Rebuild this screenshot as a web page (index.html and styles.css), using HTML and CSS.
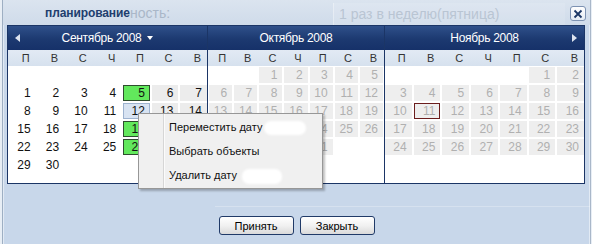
FILE: index.html
```html
<!DOCTYPE html>
<html lang="ru">
<head>
  <meta charset="UTF-8" />
  <title>Планирование</title>
  <link rel="stylesheet" href="styles.css">
</head>
<body>

  <div class="dialog">
    <div class="dialog-head">
      <span class="ghost ghost-label">ность:</span>
      <span class="ghost ghost-field">1 раз в неделю(пятница)</span>
      <span class="dialog-title">планирование</span>
      <button class="close-btn" title="Закрыть">
        <svg width="10" height="10" viewBox="0 0 10 10"><path d="M1.5 1.5L8.5 8.5M8.5 1.5L1.5 8.5" stroke="#1c3766" stroke-width="1.8" fill="none"/></svg>
      </button>
    </div>

    <div class="calendar">
      <div class="month m-sep">
        <div class="month-head">
          <span class="nav nav-prev"></span>
          <span class="month-title">Сентябрь 2008 <span class="drop"></span></span>
          <span></span>
        </div>
        <div class="dow"><span>П</span><span>В</span><span>С</span><span>Ч</span><span>П</span><span>С</span><span>В</span></div>
        <div class="days" id="sep"></div>
      </div>
      <div class="month m-oct">
        <div class="month-head">
          <span></span>
          <span class="month-title">Октябрь 2008</span>
          <span></span>
        </div>
        <div class="dow"><span>П</span><span>В</span><span>С</span><span>Ч</span><span>П</span><span>С</span><span>В</span></div>
        <div class="days" id="oct"></div>
      </div>
      <div class="month m-nov">
        <div class="month-head">
          <span></span>
          <span class="month-title">Ноябрь 2008</span>
          <span class="nav nav-next"></span>
        </div>
        <div class="dow"><span>П</span><span>В</span><span>С</span><span>Ч</span><span>П</span><span>С</span><span>В</span></div>
        <div class="days" id="nov"></div>
      </div>
    </div>

    <div class="ghost-line"></div>

    <div class="dialog-foot">
      <button class="btn">Принять</button>
      <button class="btn">Закрыть</button>
    </div>

    <div class="ctx-menu">
      <div class="ctx-item">Переместить дату<span class="blot blot-1"></span></div>
      <div class="ctx-item">Выбрать объекты</div>
      <div class="ctx-item">Удалить дату<span class="blot blot-2"></span></div>
    </div>
  </div>

  <script>
    function fillMonth(id, offset, count, dayClass) {
      const grid = document.getElementById(id);
      for (let i = 0; i < 42; i++) {
        const cell = document.createElement("span");
        const day = i - offset + 1;
        cell.className = "day";
        if (day >= 1 && day <= count) {
          cell.textContent = day;
          cell.className += " " + dayClass(day, i % 7);
        }
        grid.appendChild(cell);
      }
    }

    // september: scheduled days are green, weekends grey
    fillMonth("sep", 7, 30, function(day, col) {
      if ([5, 19, 26].includes(day)) return "hit";
      if (day === 12) return "now";
      return col > 4 ? "we" : "";
    });
    fillMonth("oct", 2, 31, function() { return "off"; });
    fillMonth("nov", 5, 30, function(day) {
      return day === 11 ? "off mark" : "off";
    });
  </script>
</body>
</html>
```

FILE: styles.css
```css
* {
  box-sizing: border-box;
}

body {
  margin: 0;
  width: 592px;
  height: 244px;
  overflow: hidden;
  background: #e8eef5;
  font-family: "Liberation Sans", Arial, sans-serif;
}

.dialog {
  position: relative;
  margin-left: 2px;
  width: 589px;
  height: 244px;
  border-left: 1px solid #9eafc3;
  border-right: 1px solid #a9b7c9;
  background: #c8d7ea;
  box-shadow: inset 1px 0 #e2eaf4, inset -1px 0 #e2eaf4;
}

.dialog-head {
  position: relative;
  height: 25px;
  display: flex;
  align-items: center;
  padding: 0 4px 0 42px;
  background: linear-gradient(#dbe4ef, #cfdbea);
}

.ghost {
  position: absolute;
  color: #aab7c8;
  font-size: 14px;
}

.ghost-label {
  left: 127px;
  top: 5px;
}

.ghost-field {
  left: 330px;
  top: 3px;
  width: 232px;
  height: 22px;
  line-height: 22px;
  padding-left: 5px;
  color: #b9c5d3;
  background: rgba(255, 255, 255, 0.12);
  border-left: 1px solid rgba(255, 255, 255, 0.35);
}

.dialog-title {
  position: relative;
  font-size: 12px;
  font-weight: bold;
  color: #213e6e;
  letter-spacing: -0.1px;
}

.close-btn {
  position: relative;
  margin-left: auto;
  margin-top: 2px;
  width: 16px;
  height: 15px;
  padding: 0;
  display: flex;
  align-items: center;
  justify-content: center;
  border: 1px solid #7d92b2;
  border-radius: 3px;
  background: linear-gradient(#ffffff, #e4ebf4);
}

.calendar {
  margin-left: 4px;
  width: 578px;
  display: flex;
  border: 1px solid #1b3566;
  background: #fff;
}

.month {
  display: flex;
  flex-direction: column;
}

.m-sep {
  width: 199px;
}

.m-oct {
  width: 177px;
  border-left: 1px solid #1b3566;
}

.m-nov {
  width: 200px;
  border-left: 1px solid #1b3566;
}

.month-head {
  height: 24px;
  display: grid;
  grid-template-columns: 20px 1fr 20px;
  align-items: center;
  background: linear-gradient(#2f508a, #1c3970 55%, #163169);
  color: #fff;
}

.month-title {
  justify-self: center;
  display: flex;
  align-items: center;
  gap: 6px;
  font-size: 12px;
  letter-spacing: -0.3px;
}

.drop {
  border-left: 3.5px solid transparent;
  border-right: 3.5px solid transparent;
  border-top: 4px solid #fff;
}

.nav {
  width: 0;
  height: 0;
  border-top: 4px solid transparent;
  border-bottom: 4px solid transparent;
}

.nav-prev {
  justify-self: start;
  margin-left: 7px;
  border-right: 5px solid #dde4ef;
}

.nav-next {
  justify-self: end;
  margin-right: 7px;
  border-left: 5px solid #dde4ef;
}

.dow,
.days {
  display: grid;
  grid-template-columns: repeat(7, 1fr);
  column-gap: 2px;
}

.dow {
  height: 16px;
  align-items: center;
  background: linear-gradient(#e2eaf4, #d6e1ee);
  font-size: 11px;
  color: #333;
  text-align: right;
}

.dow span {
  padding-right: 6px;
}

.days {
  grid-auto-rows: 16px;
  row-gap: 2px;
  padding-top: 1px;
  padding-bottom: 10px;
}

.m-sep .dow,
.m-sep .days {
  padding-left: 1px;
}

.m-oct .dow,
.m-oct .days {
  padding-left: 1px;
  padding-right: 1px;
}

.day {
  font-size: 12px;
  line-height: 16px;
  text-align: right;
  padding-right: 5px;
  color: #111;
}

.day.we {
  background: #ececec;
}

.day.hit {
  background: #62e85c;
  border: 1px solid #2e4d2e;
  line-height: 14px;
  padding-right: 4px;
}

.day.now {
  background: #d8e3f2;
  border: 1px solid #9db2cf;
  line-height: 14px;
  padding-right: 4px;
}

.day.off {
  background: #eeeeee;
  color: #b0b0b0;
}

.day.mark {
  border: 1px solid #6b1d1d;
  line-height: 14px;
  padding-right: 4px;
}

.ghost-line {
  height: 1px;
  margin: 22px 0 0 212px;
  background: rgba(255, 255, 255, 0.25);
}

.dialog-foot {
  display: flex;
  justify-content: center;
  gap: 6px;
  margin-top: 9px;
}

.btn {
  width: 75px;
  height: 19px;
  padding: 0;
  border: 1px solid #203a68;
  border-radius: 3px;
  background: linear-gradient(#ffffff, #f1f1f1 50%, #dadada);
  font-family: "Liberation Sans", Arial, sans-serif;
  font-size: 11px;
  color: #000;
}

.ctx-menu {
  position: absolute;
  left: 135px;
  top: 113px;
  width: 185px;
  height: 76px;
  padding-top: 1px;
  border: 1px solid #979797;
  background: linear-gradient(to right, #f0f0f0 24px, #d6d6d6 24px, #d6d6d6 25px, #fbfbfb 25px, #fbfbfb 26px, #f0f0f0 26px);
  box-shadow: 2px 2px 2px rgba(0, 0, 0, 0.25);
}

.ctx-item {
  height: 24px;
  line-height: 24px;
  padding-left: 30px;
  font-size: 11px;
  color: #111;
}

.blot {
  display: inline-block;
  vertical-align: middle;
  background: #fff;
  border-radius: 7px;
  filter: blur(1px);
}

.blot-1 {
  width: 42px;
  height: 14px;
  margin-left: 2px;
}

.blot-2 {
  width: 40px;
  height: 15px;
  margin-left: 5px;
}
```
